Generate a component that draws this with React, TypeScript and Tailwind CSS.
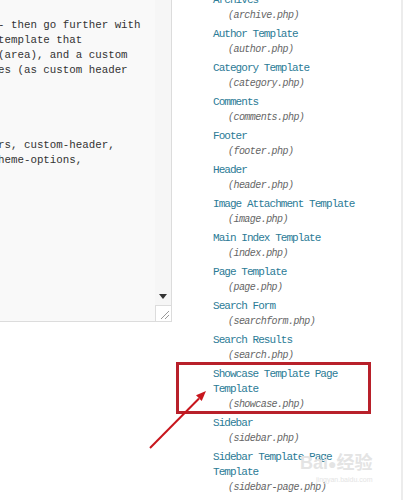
import { FC } from 'react';

const editorLines = [
  '- then go further with',
  'template that',
  '(area), and a custom',
  'es (as custom header',
  '',
  '',
  '',
  '',
  'rs, custom-header,',
  'heme-options,',
];

const templates = [
  { title: 'Archives', file: '(archive.php)' },
  { title: 'Author Template', file: '(author.php)' },
  { title: 'Category Template', file: '(category.php)' },
  { title: 'Comments', file: '(comments.php)' },
  { title: 'Footer', file: '(footer.php)' },
  { title: 'Header', file: '(header.php)' },
  { title: 'Image Attachment Template', file: '(image.php)' },
  { title: 'Main Index Template', file: '(index.php)' },
  { title: 'Page Template', file: '(page.php)' },
  { title: 'Search Form', file: '(searchform.php)' },
  { title: 'Search Results', file: '(search.php)' },
  { title: 'Showcase Template Page Template', file: '(showcase.php)' },
  { title: 'Sidebar', file: '(sidebar.php)' },
  { title: 'Sidebar Template Page Template', file: '(sidebar-page.php)' },
];

const mono = { fontFamily: '"Liberation Mono", "DejaVu Sans Mono", monospace' };

const Editor: FC = () => (
  <div className="relative h-[322px] w-[172px] overflow-hidden border-r border-b border-[#dcdcdc] bg-[#f9f9f9]">
    <div
      className="-ml-[2px] pt-[18px] text-[10.8px] leading-[15px] whitespace-pre text-[#333]"
      style={mono}
    >
      {editorLines.map((line, i) => (
        <div key={i} className="h-[15px]">
          {line}
        </div>
      ))}
    </div>
    {/* scrollbar */}
    <div className="absolute top-0 right-0 bottom-0 flex w-[16px] flex-col justify-end bg-[#f6f6f6]">
      <div className="flex h-[18px] items-center justify-center">
        <svg width="8" height="5" viewBox="0 0 8 5">
          <path d="M0 0 L8 0 L4 5 Z" fill="#333" />
        </svg>
      </div>
      <div className="flex h-[16px] items-end justify-end border-t border-l border-[#dcdcdc] bg-white pr-[2px] pb-[2px]">
        <svg width="9" height="9" viewBox="0 0 9 9">
          <path d="M1 9 L9 1 M5 9 L9 5" stroke="#999" strokeWidth="1" />
        </svg>
      </div>
    </div>
  </div>
);

const TemplateList: FC = () => (
  <ul className="-mt-[7.5px] pl-[41px]">
    {templates.map(({ title, file }) => (
      <li key={file} className="mb-[4px]">
        <div
          className="w-[160px] text-[11px] leading-[15px] tracking-[-0.95px] text-[#2b7b96]"
          style={mono}
        >
          {title}
        </div>
        <div
          className="pl-[15px] text-[10px] leading-[15px] tracking-[-0.55px] text-[#666] italic"
          style={mono}
        >
          {file}
        </div>
      </li>
    ))}
  </ul>
);

export default function App() {
  return (
    <div className="relative flex h-[500px] w-[403px] overflow-hidden bg-white">
      <div className="w-[172px] shrink-0">
        <Editor />
      </div>
      <div className="flex-1 overflow-hidden border-r-2 border-[#ececec]">
        <TemplateList />
      </div>

      {/* highlight */}
      <div className="absolute top-[362px] left-[176px] h-[52px] w-[195px] border-[3px] border-[#b8202a]" />
      <svg className="absolute top-0 left-0" width="403" height="500" viewBox="0 0 403 500">
        <line x1="150" y1="448" x2="199" y2="398.5" stroke="#c8161d" strokeWidth="2" />
        <path d="M206 391 L201.7 401 L196 395.3 Z" fill="#c8161d" />
      </svg>

      {/* watermark */}
      <div className="pointer-events-none absolute top-[452px] left-[300px] flex flex-col items-end text-[#e4e4e4]">
        <div
          className="text-[18px] leading-[22px] font-bold"
          style={{ fontFamily: '"Liberation Sans", "Noto Sans CJK SC", sans-serif' }}
        >
          Bai<span className="text-[14px]">●</span>经验
        </div>
        <div className="text-[7px] leading-[9px]" style={{ fontFamily: '"Liberation Sans", sans-serif' }}>
          jingyan.baidu.com
        </div>
      </div>
    </div>
  );
}
